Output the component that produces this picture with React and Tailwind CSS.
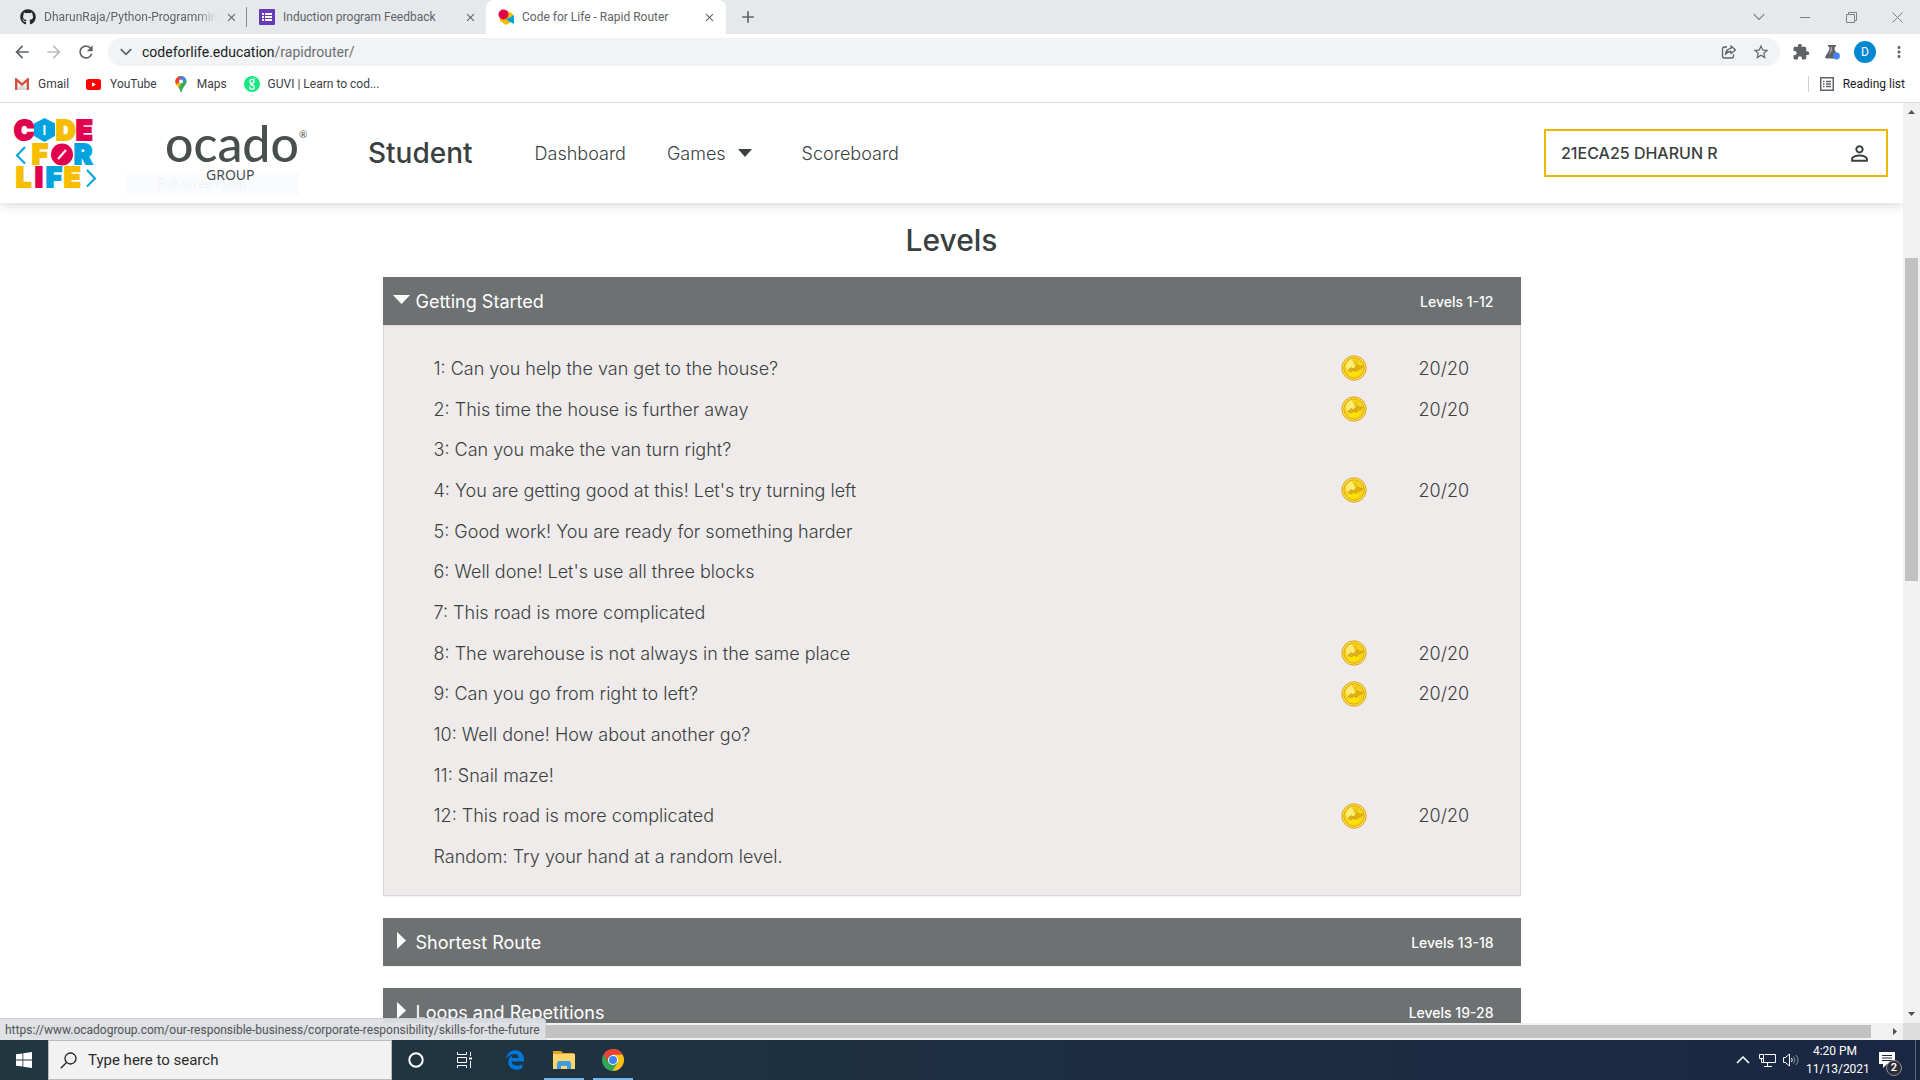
import React from "react";
import {
  MdArrowBack,
  MdArrowForward,
  MdClose,
  MdExtension,
  MdMoreVert,
  MdOutlinePersonOutline,
  MdRefresh,
  MdStarBorder,
  MdAdd,
} from "react-icons/md";
import { FaEdgeLegacy, FaGithub } from "react-icons/fa";

const levels = [
  { name: "1: Can you help the van get to the house?", score: "20/20" },
  { name: "2: This time the house is further away", score: "20/20" },
  { name: "3: Can you make the van turn right?" },
  { name: "4: You are getting good at this! Let's try turning left", score: "20/20" },
  { name: "5: Good work! You are ready for something harder" },
  { name: "6: Well done! Let's use all three blocks" },
  { name: "7: This road is more complicated" },
  { name: "8: The warehouse is not always in the same place", score: "20/20" },
  { name: "9: Can you go from right to left?", score: "20/20" },
  { name: "10: Well done! How about another go?" },
  { name: "11: Snail maze!" },
  { name: "12: This road is more complicated", score: "20/20" },
  { name: "Random: Try your hand at a random level." },
];

/* ---------- icons ---------- */

function FormsIcon() {
  return (
    <svg width="16" height="16" viewBox="0 0 16 16" className="shrink-0">
      <rect width="16" height="16" rx="1" fill="#673ab7" />
      <path d="M3 4h2v2H3zM6 4h7v2H6zM3 7h2v2H3zM6 7h7v2H6zM3 10h2v2H3zM6 10h7v2H6z" fill="#fff" />
    </svg>
  );
}

function CodeForLifeFavicon() {
  return (
    <svg width="16" height="16" viewBox="0 0 16 16" className="shrink-0">
      <path d="M8 1l7 4v7l-7 4-6-4V5z" fill="#f7bd00" />
      <path d="M16 6v9L8 10.5z" fill="#00a3e0" />
      <circle cx="5.5" cy="5.500" r="5" fill="#e0004d" />
    </svg>
  );
}

function GmailIcon() {
  return (
    <svg width="14" height="12" viewBox="0 0 14 12" className="shrink-0">
      <rect x="1" y="1" width="12" height="10" fill="#f1efee" />
      <path d="M2 12l5-5 5 5z" fill="#d9d7d6" />
      <path d="M1.200 12V1.500L7 6.500l5.800-5V12" fill="none" stroke="#d54b3d" strokeWidth="2.300" />
    </svg>
  );
}

function YouTubeIcon() {
  return (
    <svg width="15" height="11" viewBox="0 0 15 11" className="shrink-0">
      <rect width="15" height="11" rx="2.500" fill="#f00" />
      <path d="M6 3.200v4.600l4-2.300z" fill="#fff" />
    </svg>
  );
}

function MapsIcon() {
  return (
    <svg width="12" height="16" viewBox="0 0 12 16" className="shrink-0">
      <clipPath id="pin">
        <path d="M6 0a5.600 5.600 0 0 1 5.600 5.600C11.600 9 7.500 11 6.700 15.500q-.7 1-1.400 0C4.500 11 .4 9 .4 5.600A5.600 5.600 0 0 1 6 0z" />
      </clipPath>
      <g clipPath="url(#pin)">
        <rect width="12" height="16" fill="#34a853" />
        <path d="M0 0h12L0 14z" fill="#fbbc04" />
        <path d="M0 0h9L0 9z" fill="#ea4335" />
        <path d="M4 0h8v3L6 8z" fill="#4285f4" />
        <path d="M0 2l3-2 4 4-5 5z" fill="#ea4335" />
        <path d="M0 9l3-2 3 2-5 5z" fill="#fbbc04" />
      </g>
      <circle cx="6" cy="5.600" r="2" fill="#fff" />
    </svg>
  );
}

function GuviIcon() {
  return (
    <svg width="16" height="16" viewBox="0 0 16 16" className="shrink-0">
      <circle cx="8" cy="8" r="8" fill="#17e884" />
      <circle cx="8" cy="5.300" r="2" fill="none" stroke="#fff" strokeWidth="1.300" />
      <path d="M10 3l.8-.8M8 7.300c-2 .5-2 1.500 0 1.700 3 .4 3 4.300 0 4.300-2.200 0-2.800-1.800-1.800-2.800" fill="none" stroke="#fff" strokeWidth="1.300" />
    </svg>
  );
}

function ReadingListIcon() {
  return (
    <svg width="14" height="14" viewBox="0 0 14 14" className="shrink-0" fill="none" stroke="#5f6368">
      <rect x=".75" y=".75" width="12.500" height="12.500" strokeWidth="1.500" />
      <path d="M3 4.500h1.500M6 4.500h5M3 7h1.500M6 7h5M3 9.500h1.500M6 9.500h5" strokeWidth="1.400" />
    </svg>
  );
}

function ShareIcon() {
  return (
    <svg width="16" height="16" viewBox="0 0 16 16" fill="none" stroke="#5f6368" strokeWidth="1.300">
      <path d="M6 3H3.500Q1.500 3 1.500 5v7q0 2 2 2h7q2 0 2-2v-1.500" />
      <path d="M10 2l4.500 4L10 9.500V7.500Q6 7.300 4.500 10.500 5 5 10 4.300z" strokeLinejoin="round" />
    </svg>
  );
}

function FlaskIcon() {
  return (
    <svg width="16" height="16" viewBox="0 0 16 16">
      <path d="M4 1h8v1.800h-1.300V6l4 6.500q.6 2-1.200 2H2.500q-1.800 0-1.200-2l4-6.500V2.800H4z" fill="#5f6368" />
      <path d="M6.800 3h1v3.500L5 11.500 6.800 6z" fill="#fff" opacity=".6" />
      <circle cx="12.500" cy="12" r="3.400" fill="#4285f4" />
    </svg>
  );
}

function Chevron({ size, color, width }) {
  return (
    <svg width={size} height={size} viewBox="0 0 12 12" fill="none" stroke={color} strokeWidth={width}>
      <path d="M1.500 3.500L6 8l4.500-4.500" />
    </svg>
  );
}

function CodeForLifeLogo() {
  return (
    <svg width="82" height="71" viewBox="0 0 82 71" role="img" aria-label="Code for Life" className="overflow-visible" fontFamily="Inter, sans-serif" fontWeight="900" fontSize="27" strokeWidth="2">
      <text x="-1" y="22" fill="#e0004d" stroke="#e0004d">C</text>
      <path d="M29.500 0L40 5.500v12.500l-10.500 6L19 18V5.500z" fill="#00a3e0" />
      <path d="M29.500 7v10" stroke="#fff" />
      <text x="41" y="22" fill="#f7bd00" stroke="#f7bd00">D</text>
      <text x="61" y="22" fill="#e0004d" stroke="#e0004d">E</text>
      <path d="M10 29l-8 8.500 8 8" fill="none" stroke="#00a3e0" />
      <text x="17" y="46" fill="#f7bd00" stroke="#f7bd00">F</text>
      <circle cx="47" cy="36.500" r="11" fill="#e0004d" />
      <path d="M43 41l8-9" stroke="#fff" />
      <text x="59" y="46" fill="#00a3e0" stroke="#00a3e0">R</text>
      <text x="1" y="69" fill="#f7bd00" stroke="#f7bd00">L</text>
      <text x="20" y="69" fill="#e0004d" stroke="#e0004d">I</text>
      <text x="31" y="69" fill="#00a3e0" stroke="#00a3e0">F</text>
      <text x="49" y="69" fill="#f7bd00" stroke="#f7bd00">E</text>
      <path d="M72 52l8 8.500-8 8" fill="none" stroke="#00a3e0" />
    </svg>
  );
}

function Coin() {
  return (
    <svg width="26" height="26" viewBox="0 0 26 26" role="img" aria-label="Coin" className="block">
      <circle cx="13" cy="13" r="12.200" fill="#fbe25a" stroke="#dba514" />
      <circle cx="13" cy="13" r="10.200" fill="#f6d416" stroke="#dfa61a" />
      <path d="M5 10q2-5 6-6l3 6-4 8q-5-2-5-8z" fill="#fdf191" opacity=".8" />
      <path d="M7 20q6 4 12-1l-3-3-7 1z" fill="#ffe600" opacity=".8" />
      <path d="M7 15.500l3-3 2 1.500 3-1.500 1-3 2 1.500 4 .5-2 2-3 .5-1.500 2.500-3-1.500-2 2z" fill="#e3b31c" stroke="#c4900f" strokeWidth=".7" />
      <path d="M12 5l2 3M16 5l-2 5" fill="none" stroke="#e3b31c" />
    </svg>
  );
}

/* ---------- browser ---------- */

function Tab({ icon, title, active, divider }) {
  return (
    <div
      className={
        "flex h-full items-center gap-2 pl-3 text-[12px] text-[#5f6368] " +
        (active ? "w-[240px] rounded-t-lg bg-white pr-[10px]" : "w-[239px] pr-[9px]")
      }
    >
      {icon}
      <span className={"min-w-0 flex-1 overflow-hidden whitespace-nowrap " + (divider ? "[mask-image:linear-gradient(to_right,black_88%,transparent)]" : "")}>
        {title}
      </span>
      <button type="button" aria-label="Close tab" className="shrink-0">
        <MdClose size={13} color="#5f6368" />
      </button>
    </div>
  );
}

function TabStrip() {
  return (
    <div className="flex h-[34px] shrink-0 items-center bg-[#e5e9eb] pl-2">
      <Tab icon={<FaGithub size={16} color="#24292f" className="shrink-0" />} title="DharunRaja/Python-Programming" divider />
      <div className="-ml-px h-5 w-px bg-[#888c90]" />
      <Tab icon={<FormsIcon />} title="Induction program Feedback" />
      <Tab icon={<CodeForLifeFavicon />} title="Code for Life - Rapid Router" active />
      <button type="button" aria-label="New tab" className="ml-3">
        <MdAdd size={20} color="#5f6368" />
      </button>
      <div className="ml-auto flex text-[#7d8185]">
        <button type="button" aria-label="Search tabs" className="flex w-[46px] justify-center">
          <Chevron size={14} color="#7d8185" width={1} />
        </button>
        <button type="button" aria-label="Minimize" className="flex w-[46px] items-center justify-center">
          <span className="h-px w-[10px] bg-[#7d8185]" />
        </button>
        <button type="button" aria-label="Restore" className="flex w-[46px] items-center justify-center">
          <svg width="11" height="11" viewBox="0 0 11 11" fill="none" stroke="#7d8185">
            <path d="M.5 2.500h8v8h-8zM2.500 2.500v-2h8v8h-2" />
          </svg>
        </button>
        <button type="button" aria-label="Close" className="flex w-[46px] items-center justify-center">
          <svg width="11" height="11" viewBox="0 0 11 11" stroke="#7d8185">
            <path d="M.5 .5l10 10M10.500 .5l-10 10" />
          </svg>
        </button>
      </div>
    </div>
  );
}

function Toolbar() {
  return (
    <div className="flex h-9 shrink-0 items-center bg-white pr-3">
      <div className="flex w-[108px] shrink-0 items-center gap-3 pl-3">
        <button type="button" aria-label="Back"><MdArrowBack size={20} color="#5f6368" /></button>
        <button type="button" aria-label="Forward"><MdArrowForward size={20} color="#babcbe" /></button>
        <button type="button" aria-label="Reload"><MdRefresh size={20} color="#5f6368" /></button>
      </div>
      <div className="flex h-7 min-w-0 flex-1 items-center rounded-full bg-[#f1f3f4] px-[10px]">
        <button type="button" aria-label="Site information" className="mr-2 flex w-4 justify-center">
          <Chevron size={14} color="#5f6368" width={1.500} />
        </button>
        <div className="flex-1 text-[14px] text-[#6b6f73]">
          <span className="text-[#202124]">codeforlife.education</span>/rapidrouter/
        </div>
        <button type="button" aria-label="Share" className="mr-[15px]"><ShareIcon /></button>
        <button type="button" aria-label="Bookmark"><MdStarBorder size={18} color="#5f6368" /></button>
      </div>
      <div className="ml-3 flex items-center gap-[14px]">
        <button type="button" aria-label="Extensions"><MdExtension size={18} color="#5f6368" /></button>
        <button type="button" aria-label="Labs"><FlaskIcon /></button>
        <button type="button" className="flex size-[22px] items-center justify-center rounded-full bg-[#0288d1] text-[12px] text-white">D</button>
        <button type="button" aria-label="Menu"><MdMoreVert size={18} color="#5f6368" /></button>
      </div>
    </div>
  );
}

function BookmarksBar() {
  return (
    <div className="flex h-[33px] shrink-0 items-center border-b border-[#d9dadb] bg-white pb-1 pl-[15px] pr-[15px] text-[12px] text-[#3c4043]">
      <a href="#gmail" className="mr-[17px] flex items-center gap-[9px]"><GmailIcon />Gmail</a>
      <a href="#youtube" className="mr-[18px] flex items-center gap-[9px]"><YouTubeIcon />YouTube</a>
      <a href="#maps" className="mr-[17px] flex items-center gap-[10px]"><MapsIcon />Maps</a>
      <a href="#guvi" className="flex items-center gap-2"><GuviIcon />GUVI | Learn to cod...</a>
      <button type="button" className="ml-auto flex items-center gap-[9px] text-[#202124]">
        <span className="mr-[2px] h-4 w-px bg-[#cdcfd1]" />
        <ReadingListIcon />
        Reading list
      </button>
    </div>
  );
}

/* ---------- site ---------- */

function SiteHeader() {
  return (
    <header className="relative z-10 flex h-[100px] shrink-0 items-center bg-white pl-[15px] pr-[15px] text-[#3a3f3f] shadow-[0_2px_10px_rgba(0,0,0,0.16)]">
      <div className="absolute left-[126px] top-[70px] h-[22px] w-[173px] bg-[#f5f8fe]/50 pl-8 font-['Open_Sans',sans-serif] text-[12px] leading-[22px] text-[#e9ebf0]/60">
        Full-screen Snip
      </div>
      <a href="#home"><CodeForLifeLogo /></a>
      <a href="#ocado" className="relative ml-[68px] flex w-[144px] flex-col font-['Lato',sans-serif] text-[#474f4f]">
        <span className="flex">
          <span className="text-[50px] font-medium leading-[40px]">ocado</span>
          <span className="mt-1 text-[10px]">®</span>
        </span>
        <span className="pl-[41px] pt-1 font-['Noto_Sans',sans-serif] text-[14px] leading-4">GROUP</span>
      </a>
      <h1 className="ml-[59px] text-[28px] font-medium">Student</h1>
      <nav className="ml-[62px] flex items-center text-[18px] font-light">
        <a href="#dashboard" className="mr-[41px]">Dashboard</a>
        <button type="button" className="mr-[50px] flex items-center gap-3">
          Games
          <svg width="14" height="8" viewBox="0 0 14 8"><path d="M0 0h14L7 8z" fill="#3a3f3f" /></svg>
        </button>
        <a href="#scoreboard">Scoreboard</a>
      </nav>
      <button type="button" className="ml-auto flex h-12 w-[344px] items-center justify-between border-2 border-[#ebb700] pl-[15px] pr-[14px] text-[16px] font-medium">
        21ECA25 DHARUN R
        <MdOutlinePersonOutline size={25} />
      </button>
    </header>
  );
}

function AccordionHeader({ title, range, open }) {
  return (
    <button
      type="button"
      aria-expanded={!!open}
      className="flex h-12 w-full items-center bg-[#6d7172] pl-[10px] pr-[27px] text-left text-white shadow-[0_1px_1px_rgba(0,0,0,0.05)]"
    >
      <span className="mb-1 flex w-[23px] shrink-0 pr-[6px]">
        {open ? (
          <svg width="17" height="9" viewBox="0 0 17 9"><path d="M0 0h17L8.500 9z" fill="#fff" /></svg>
        ) : (
          <svg width="17" height="17" viewBox="0 0 17 17"><path d="M4 0l9 8.500L4 17z" fill="#fff" /></svg>
        )}
      </span>
      <span className="flex-1 text-[18px]">{title}</span>
      <span className="text-[14px] font-medium">{range}</span>
    </button>
  );
}

function LevelsPage() {
  return (
    <main className="mx-auto w-full max-w-[1170px] px-4 text-[#3a3f3f]">
      <h2 className="py-4 text-center text-[30px] font-medium leading-[42px]">Levels</h2>
      <section className="mb-[22px]">
        <AccordionHeader title="Getting Started" range="Levels 1-12" open />
        <div className="border border-[#d9d9dc] bg-[#efebea] pb-[18px] pt-[22px] shadow-[0_1px_1px_rgba(0,0,0,0.05)]">
          <table className="h-[529px] w-full text-[18px] font-light">
            <tbody>
              {levels.map((level) => (
                <tr key={level.name}>
                  <td className="p-0 pl-[50px]"><a href="#level">{level.name}</a></td>
                  <td className="w-[78px] p-0">{level.score && <Coin />}</td>
                  <td className="w-[101px] p-0">{level.score}</td>
                </tr>
              ))}
            </tbody>
          </table>
        </div>
      </section>
      <section className="mb-[22px]"><AccordionHeader title="Shortest Route" range="Levels 13-18" /></section>
      <section><AccordionHeader title="Loops and Repetitions" range="Levels 19-28" /></section>
    </main>
  );
}

function VerticalScrollbar() {
  return (
    <div className="flex w-[17px] shrink-0 flex-col items-center justify-between bg-[#f1f1f1] py-[7px]">
      <svg width="7" height="4" viewBox="0 0 7 4"><path d="M3.500 0L7 4H0z" fill="#505050" /></svg>
      <div className="flex w-full flex-1 flex-col items-center">
        <div className="basis-[16%]" />
        <div className="w-[13px] basis-[36%] bg-[#c1c1c1]" />
      </div>
      <svg width="7" height="4" viewBox="0 0 7 4"><path d="M3.500 4L7 0H0z" fill="#505050" /></svg>
    </div>
  );
}

function HorizontalScrollbar() {
  return (
    <div className="relative flex h-[17px] shrink-0 items-center bg-[#f1f1f1]">
      <div className="ml-[17px] mr-[22px] h-[13px] flex-1 bg-[#c1c1c1]" />
      <svg width="4" height="7" viewBox="0 0 4 7" className="mr-[6px]"><path d="M0 0l4 3.500L0 7z" fill="#505050" /></svg>
      <div className="size-[17px] bg-[#dcdcdc]" />
      <div className="absolute bottom-0 left-0 z-20 h-[22px] rounded-tr-[4px] border-r border-t border-[#cfd0d4] bg-[#dee0e5]/95 pl-[5px] pr-[5px] text-[12px] leading-[22px] text-[#505356]">
        https://www.ocadogroup.com/our-responsible-business/corporate-responsibility/skills-for-the-future
      </div>
    </div>
  );
}

/* ---------- taskbar ---------- */

function TaskButton({ label, running, children }) {
  return (
    <button type="button" aria-label={label} className="flex h-10 w-12 flex-col items-center">
      <span className="flex flex-1 items-center">{children}</span>
      {running && <span className="-mt-[2px] h-[2px] w-10 bg-[#76b9ed]" />}
    </button>
  );
}

function Taskbar() {
  return (
    <footer className="flex h-10 shrink-0 items-center bg-linear-to-r from-[#213740] to-[#1a2743] text-white">
      <TaskButton label="Start">
        <svg width="16" height="16" viewBox="0 0 16 16" fill="#fff">
          <path d="M0 2.300L6.500 1.400v6.200H0zM7.300 1.300L16 0v7.600H7.300zM0 8.400h6.500v6.200L0 13.700zM7.300 8.400H16V16l-8.700-1.300z" />
        </svg>
      </TaskButton>
      <label className="flex h-10 w-[344px] items-center gap-[11px] border border-[#b9bcbe] bg-[#f2f2f2] pl-[11px] text-[#202020]">
        <svg width="17" height="17" viewBox="0 0 17 17" fill="none" stroke="#202020" strokeWidth="1.300">
          <circle cx="10.500" cy="6.500" r="5.500" />
          <path d="M6.500 10.500L.8 16.200" />
        </svg>
        <input
          type="text"
          aria-label="Search"
          placeholder="Type here to search"
          className="min-w-0 flex-1 bg-transparent text-[15px] outline-none placeholder:text-[#2b2b2b]"
        />
      </label>
      <TaskButton label="Cortana">
        <svg width="16" height="16" viewBox="0 0 16 16"><circle cx="8" cy="8" r="6.700" fill="none" stroke="#fff" strokeWidth="2" /></svg>
      </TaskButton>
      <TaskButton label="Task View">
        <svg width="17" height="16" viewBox="0 0 17 16" fill="none" stroke="#fff">
          <path d="M1.500 0v2.500h9V0M1.500 5.500h9v5h-9zM1.500 16v-2.500h9V16M14.500 0v4M14.500 9v7" />
          <path d="M13 5.500h3v2h-3z" fill="#fff" stroke="none" />
        </svg>
      </TaskButton>
      <div className="flex gap-px pl-[3px]">
        <TaskButton label="Edge"><FaEdgeLegacy size={20} color="#0078d7" /></TaskButton>
        <TaskButton label="File Explorer" running>
          <svg width="22" height="18" viewBox="0 0 22 18">
            <path d="M0 0h8l2 2h11v5H0z" fill="#e9a21b" />
            <path d="M0 3h22v15H0z" fill="#fdd76b" />
            <path d="M4 18v-6q0-2 2-2h10q2 0 2 2v6h-4v-3H8v3z" fill="#3f9be0" />
          </svg>
        </TaskButton>
        <TaskButton label="Chrome" running>
          <svg width="22" height="22" viewBox="0 0 22 22">
            <path d="M11 11V0a11 11 0 0 1 0 22z" fill="#fbc116" />
            <path d="M11 11L1.500 5.500A11 11 0 0 0 10.500 22l5-8z" fill="#34a652" />
            <path d="M1.500 5.500l4.800 8A5.200 5.200 0 0 1 11 5.800h9.700a11 11 0 0 0-19.200-.3z" fill="#e94335" />
            <circle cx="11" cy="11" r="5" fill="#fff" />
            <circle cx="11" cy="11" r="4" fill="#4285f4" />
          </svg>
        </TaskButton>
      </div>
      <div className="ml-auto flex h-full items-center">
        <button type="button" aria-label="Show hidden icons" className="mr-[9px]">
          <svg width="14" height="8" viewBox="0 0 14 8" fill="none" stroke="#fff" strokeWidth="1.500"><path d="M1 7l6-6 6 6" /></svg>
        </button>
        <button type="button" aria-label="Network" className="mr-[7px]">
          <svg width="17" height="14" viewBox="0 0 17 14" fill="none" stroke="#fff">
            <path d="M5.500 1.500h11v8h-12V6M8.500 10v3M5 13.500h8M.5 1.500h4v4h-4zM2.500 5.500v4h2" />
          </svg>
        </button>
        <button type="button" aria-label="Volume" className="mr-[6px]">
          <svg width="17" height="14" viewBox="0 0 17 14" fill="none" stroke="#fff">
            <path d="M.5 4.500h2L6.500 1v12l-4-3.500h-2zM8.500 5q1.500 2 0 4" />
            <path d="M10.500 3.500q3 3.500 0 7M13 2q4 5 0 10" stroke="#8a93a3" />
          </svg>
        </button>
        <div className="w-[58px] text-center text-[12px] leading-[18px]">
          <div>4:20 PM</div>
          <div className="whitespace-nowrap">11/13/2021</div>
        </div>
        <button type="button" aria-label="Notifications, 2 new" className="relative ml-[15px] mr-5">
          <svg width="16" height="16" viewBox="0 0 16 16">
            <path d="M0 0h16v12H8l-4 4v-4H0z" fill="#fff" />
            <path d="M3 3.500h10M3 6h10M3 8.500h10" stroke="#1a2743" />
          </svg>
          <span className="absolute -bottom-2 -right-[7px] flex size-4 items-center justify-center rounded-full border border-[#8c8f95] bg-[#2b2f36] text-[11px] font-semibold">
            2
          </span>
        </button>
        <div className="mr-1 h-full w-px bg-[#5d6678]" />
      </div>
    </footer>
  );
}

export default function App() {
  return (
    <div className="flex h-screen flex-col overflow-hidden bg-white font-['Roboto',sans-serif]">
      <TabStrip />
      <Toolbar />
      <BookmarksBar />
      <div className="flex min-h-0 flex-1">
        <div className="flex min-w-0 flex-1 flex-col overflow-hidden font-['Inter',sans-serif]">
          <SiteHeader />
          <LevelsPage />
        </div>
        <VerticalScrollbar />
      </div>
      <HorizontalScrollbar />
      <Taskbar />
    </div>
  );
}
